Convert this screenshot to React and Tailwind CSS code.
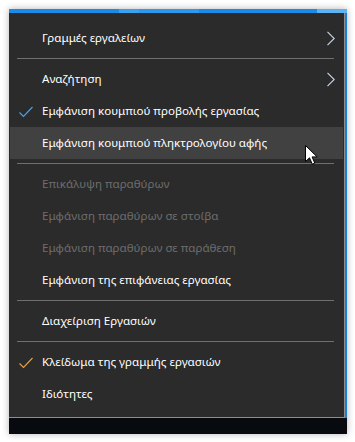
import React from "react";

const Check = ({ color }) => (
  <svg width="16" height="12" viewBox="0 0 16 12" className="absolute left-[8px] top-[11px]">
    <path d="M1.5 6.5 L5.5 10.5 L14.5 1" fill="none" stroke={color} strokeWidth="1.1" />
  </svg>
);

const Chevron = () => (
  <svg width="10" height="15" viewBox="0 0 10 15" className="absolute left-[316px] top-[9px]">
    <path d="M1.5 0.8 L8.2 7.5 L1.5 14.2" fill="none" stroke="#c8d6e6" strokeWidth="1.1" />
  </svg>
);

const Item = ({ label, disabled, check, chevron, hover }) => (
  <div
    className={
      "relative h-[32px] flex items-center pl-[32px] " +
      (hover ? "bg-[#414141] ml-[1px] mr-[1px]" : "ml-[1px] mr-[1px]")
    }
  >
    {check && <Check color={check} />}
    <span className={"text-[11.6px] leading-none " + (disabled ? "text-[#6d6d6d]" : "text-white")}>
      {label}
    </span>
    {chevron && <Chevron />}
  </div>
);

const Sep = () => <div className="h-[1px] bg-[#6f6f6f] mt-[4px] mb-[4px] ml-[8px] w-[317px]" />;

export default function App() {
  return (
    <div
      className="w-[355px] h-[442px] bg-white p-[9px] relative"
      style={{ fontFamily: '"Noto Sans", "Open Sans", sans-serif' }}
    >
      <div className="w-[338px] h-[425px] flex flex-col shadow-[0_0_7px_rgba(0,0,0,0.3)]">
        <div className="h-[4px] bg-[#1a8be6] flex">
          <div className="w-[110px]" />
          <div className="w-[20px] bg-[#3aa0f0]" />
          <div className="w-[60px] bg-[#2c98ee]" />
          <div className="flex-1" />
          <div className="w-[30px] bg-[#5db4f4]" />
        </div>
        <div className="flex flex-1">
          <div className="w-[336px] h-[405px] bg-[#2b2b2b] border-r border-b border-[#8e8e8e] pt-[9px]">
            <Item label="Γραμμές εργαλείων" chevron />
            <Sep />
            <Item label="Αναζήτηση" chevron />
            <Item label="Εμφάνιση κουμπιού προβολής εργασίας" check="#4aa3ea" />
            <Item label="Εμφάνιση κουμπιού πληκτρολογίου αφής" hover />
            <Sep />
            <Item label="Επικάλυψη παραθύρων" disabled />
            <Item label="Εμφάνιση παραθύρων σε στοίβα" disabled />
            <Item label="Εμφάνιση παραθύρων σε παράθεση" disabled />
            <Item label="Εμφάνιση της επιφάνειας εργασίας" />
            <Sep />
            <Item label="Διαχείριση Εργασιών" />
            <Sep />
            <Item label="Κλείδωμα της γραμμής εργασιών" check="#e3a24e" />
            <Item label="Ιδιότητες" />
          </div>
          <div className="w-[2px] bg-[#1a7fd0]" />
        </div>
        <div className="h-[16px] bg-[#070a0f]" />
      </div>
      <svg
        width="14"
        height="22"
        viewBox="0 0 14 22"
        className="absolute left-[305px] top-[145px]"
      >
        <path
          d="M0.5 0.5 L0.5 16.5 L4.5 12.8 L7.3 19.2 L9.8 18.1 L7.1 11.9 L12.2 11.9 Z"
          fill="white"
          stroke="black"
          strokeWidth="1"
          strokeLinejoin="miter"
        />
      </svg>
    </div>
  );
}
